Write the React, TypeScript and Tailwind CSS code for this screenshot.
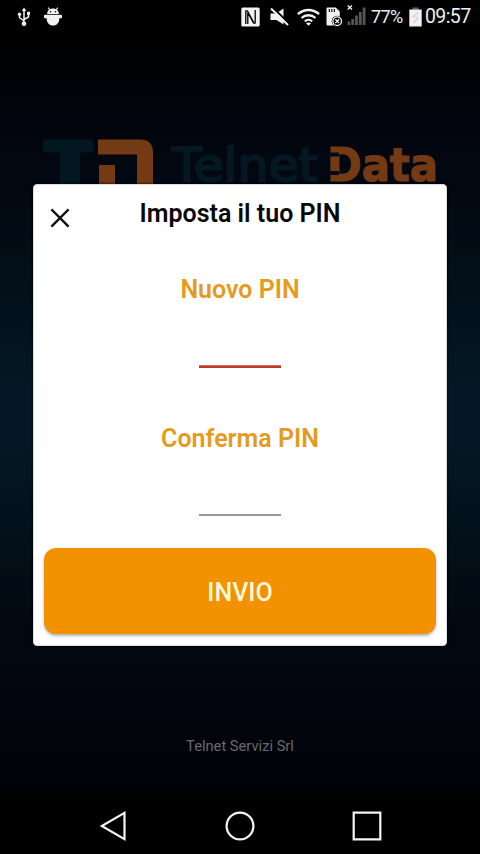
import type { ReactNode } from "react";

function UsbIcon() {
    return (
        <svg className="w-[14px] h-[20px]" viewBox="0 0 14 20" fill="none" stroke="#f2f2f2" strokeWidth="1.5">
            <path d="M7 3v13M2.5 8v2.5L7 14M11.5 7v3L7 12.5" />
            <path d="M7 0.5 9.3 4H4.7z" fill="#f2f2f2" stroke="none" />
            <circle cx="2.5" cy="7.3" r="1.7" fill="#f2f2f2" stroke="none" />
            <path d="M10 4.8h3v3h-3z" fill="#f2f2f2" stroke="none" />
            <circle cx="7" cy="16.8" r="2.3" fill="#f2f2f2" stroke="none" />
        </svg>
    );
}

function AndroidIcon() {
    return (
        <svg className="w-[18px] h-[19px]" viewBox="0 0 18 19" fill="#f2f2f2">
            <path d="M4.2.6 6 3M13.8.6 12 3" stroke="#f2f2f2" strokeWidth="1.2" />
            <path d="M3.2 7C3.2 4 5.3 1.6 9 1.6S14.8 4 14.8 7z" />
            <path d="M1 7.8h16a1 1 0 0 1 1 1v1.5a1 1 0 0 1-1 1H1a1 1 0 0 1-1-1V8.8a1 1 0 0 1 1-1z" />
            <path d="M2.6 11h12.800c0 4.800-2.600 7.600-6.400 7.600S2.600 15.800 2.600 11z" />
            <circle cx="6.5" cy="4.8" r=".8" fill="#000" />
            <circle cx="11.5" cy="4.8" r=".8" fill="#000" />
        </svg>
    );
}

function NfcIcon() {
    return (
        <svg className="w-[19px] h-[20px]" viewBox="0 0 19 20" fill="none">
            <rect x=".3" y=".5" width="18.4" height="19" rx="1.5" fill="#f2f2f2" />
            <path d="M4.8 17V3.5M4.8 3.5 6.5 4l6.2 11.5M14.2 3v13.5M14.2 16.5 12.5 16 6.8 5.5V17" stroke="#000" strokeWidth="1.3" />
        </svg>
    );
}

function MuteIcon() {
    return (
        <svg className="w-[19px] h-[18px]" viewBox="0 0 19 18">
            <path d="M.5 5.5H6L13.5.5v16L6.5 12H.5z" fill="#f2f2f2" />
            <path d="M2.600-.4 19 15.2" stroke="#000" strokeWidth="2" />
            <path d="M1 .5 18 17" stroke="#f2f2f2" strokeWidth="2" />
        </svg>
    );
}

function WifiIcon() {
    return (
        <svg className="w-[23px] h-[18px]" viewBox="0 0 23 18" fill="none" stroke="#f2f2f2" strokeWidth="2.3">
            <path d="M.9 6.200c6-5.600 15.200-5.600 21.200 0" />
            <path d="M4.5 10c4-3.700 10-3.700 14 0" />
            <path d="M7.9 13.300c2.100-1.900 5.100-1.900 7.200 0" />
            <path d="M9 15.300c1.500-1.200 3.500-1.200 5 0l-2.500 2.500z" fill="#f2f2f2" stroke="none" />
        </svg>
    );
}

function SdCardIcon() {
    return (
        <svg className="w-[17px] h-[20px]" viewBox="0 0 17 20">
            <path d="M1.5.5h8.300l4 4V18.500H1.500A1 1 0 0 1 .5 17.500V1.500a1 1 0 0 1 1-1z" fill="#f2f2f2" />
            <path d="M3.3 2v3M5.8 2v3M8.3 2v3" stroke="#000" strokeWidth="1.1" />
            <circle cx="11.2" cy="14.2" r="5.5" fill="#000" />
            <circle cx="11.2" cy="14.2" r="4.3" fill="#000" stroke="#f2f2f2" strokeWidth="1.3" />
            <path d="m9.3 12.300 3.800 3.800M13.100 12.300l-3.800 3.800" stroke="#f2f2f2" strokeWidth="1.3" />
        </svg>
    );
}

function SignalIcon() {
    return (
        <svg className="w-[19px] h-[22px]" viewBox="0 0 19 22">
            <path d="m.7 1.500 4.300 4M5 1.500.7 5.500" stroke="#f2f2f2" strokeWidth="1.3" />
            <path d="M.5 17.500h2.800V21H.5zM4.300 15h2.800v6H4.300zM8.100 11.500h2.800V21H8.100zM11.900 8h2.800v13h-2.800zM15.700 3.500h2.800V21h-2.800z" fill="#555" />
        </svg>
    );
}

function BatteryIcon() {
    return (
        <svg className="w-[13px] h-[20px]" viewBox="0 0 13 20">
            <path d="M3.5.5h6v2h-6z" fill="#666" />
            <path d="M.3 2.500h12.400v17H.3z" fill="#f2f2f2" />
            <path d="M9 5.500 4 9.500l5 1.500-4.500 5" fill="none" stroke="#cfcfcf" strokeWidth="1.2" />
        </svg>
    );
}

function StatusBar() {
    return (
        <header className="h-[33px] shrink-0 bg-black flex items-center pl-[17px] pr-[8px] text-[#eee]">
            <UsbIcon />
            <div className="ml-[13px]"><AndroidIcon /></div>
            <div className="ml-auto flex items-center">
                <NfcIcon />
                <div className="ml-[10px]"><MuteIcon /></div>
                <div className="ml-[8px]"><WifiIcon /></div>
                <div className="ml-[6px]"><SdCardIcon /></div>
                <div className="ml-[4px] -mt-[3px]"><SignalIcon /></div>
                <span className="ml-[5px] w-[34px] text-[18px] leading-none tracking-[-0.6px] whitespace-nowrap">77%</span>
                <div className="ml-[4px]"><BatteryIcon /></div>
                <span className="ml-[3px] w-[47px] text-[19.5px] leading-none tracking-[-0.6px] whitespace-nowrap">09:57</span>
            </div>
        </header>
    );
}

function Logo() {
    return (
        <svg className="w-[420px] h-[70px]" viewBox="30 130 420 70">
            {/* Mark */}
            <path d="M43 139.500h50v13H80V186H60v-33.500H43z" fill="#031721" />
            <path d="M98 139.500h42q13 0 13 13V186h-16v-31.500H98z" fill="#743a13" />
            <path d="M99 165h16v21H99z" fill="#743a13" />
            {/* Wordmark */}
            <text x="172" y="181" fontFamily="DejaVu Sans" fontSize="46" textLength="146" lengthAdjust="spacingAndGlyphs" fill="#031823" stroke="#031823" strokeWidth="2">Telnet</text>
            <text x="327" y="181" fontFamily="DejaVu Sans" fontWeight="700" fontSize="46" textLength="111" lengthAdjust="spacingAndGlyphs" fill="#743a13" stroke="#743a13" strokeWidth="1.2">Data</text>
            {/* Stencil cuts in the D */}
            <path d="M328 152.500h11v4h-11zM328 171h11v4h-11z" fill="#020a14" />
        </svg>
    );
}

function PinField({ label, children }: { label: string; children: ReactNode }) {
    return (
        <label className="shrink-0 flex flex-col items-center">
            <span className="h-[32px] leading-[32px] text-[25px] font-semibold text-[#e79a20] whitespace-nowrap">{label}</span>
            <span className="h-[59px]" />
            {children}
        </label>
    );
}

function PinDialog() {
    return (
        <div className="absolute left-[33px] top-[184px] w-[414px] h-[462px] rounded-[4px] bg-white border border-[#d8dcdf] shadow-[0_0_3px_#000] flex flex-col">
            <div className="relative h-[89px] shrink-0 pt-[13px] text-center">
                <button className="absolute left-[16px] top-[23px]" aria-label="Chiudi">
                    <svg className="w-[20px] h-[20px]" viewBox="0 0 20 20" stroke="#111" strokeWidth="2.4">
                        <path d="m1.400 1.400 17.200 17.200M18.600 1.400 1.400 18.600" />
                    </svg>
                </button>
                <h1 className="h-[32px] leading-[32px] text-[25px] font-semibold text-[#080808]">Imposta il tuo PIN</h1>
            </div>
            <PinField label="Nuovo PIN">
                <span className="w-[82px] h-[3px] border-t border-[#e06a58] bg-[#b83c2c]" />
            </PinField>
            <div className="h-[55px] shrink-0" />
            <PinField label="Conferma PIN">
                <span className="w-[82px] h-[2px] bg-[#999]" />
            </PinField>
            <button className="shrink-0 mx-[10px] mt-auto mb-[11px] h-[86px] rounded-[12px] bg-[#f39200] text-[#fff9dc] text-[25px] font-medium pt-[3px] shadow-[0_2px_3px_rgba(0,0,0,0.3)]">INVIO</button>
        </div>
    );
}

function NavBar() {
    return (
        <nav className="h-[56px] shrink-0 bg-black flex items-center justify-between pl-[99px] pr-[97px]">
            <svg className="w-[29px] h-[32px]" viewBox="0 0 29 32" fill="none" stroke="#f5f5f5" strokeWidth="2.2">
                <path d="M25.500 2.800v26.400L2.800 16z" />
            </svg>
            <svg className="w-[32px] h-[32px]" viewBox="0 0 32 32" fill="none" stroke="#f5f5f5" strokeWidth="2.2">
                <circle cx="16" cy="16" r="13.4" />
            </svg>
            <svg className="w-[32px] h-[32px]" viewBox="0 0 32 32" fill="none" stroke="#f5f5f5" strokeWidth="2.2">
                <path d="M2.700 2.700h26.600v26.600H2.700z" />
            </svg>
        </nav>
    );
}

export default function App() {
    return (
        <div className="relative w-[480px] h-[854px] overflow-hidden bg-black flex flex-col font-[Roboto,sans-serif]">
            <StatusBar />
            <main className="flex-1 flex flex-col items-center justify-between pt-[97px] pb-[42px] bg-[linear-gradient(to_bottom,#000_0%,#02040c_10%,#020812_20%,#030f18_32%,#031824_46%,#031824_54%,#030f18_68%,#020812_77%,#02040c_90%,#010206_100%)]">
                <Logo />
                <p className="h-[20px] leading-[20px] text-[14.7px] text-[#67696d]">Telnet Servizi Srl</p>
            </main>
            <NavBar />
            <PinDialog />
        </div>
    );
}
